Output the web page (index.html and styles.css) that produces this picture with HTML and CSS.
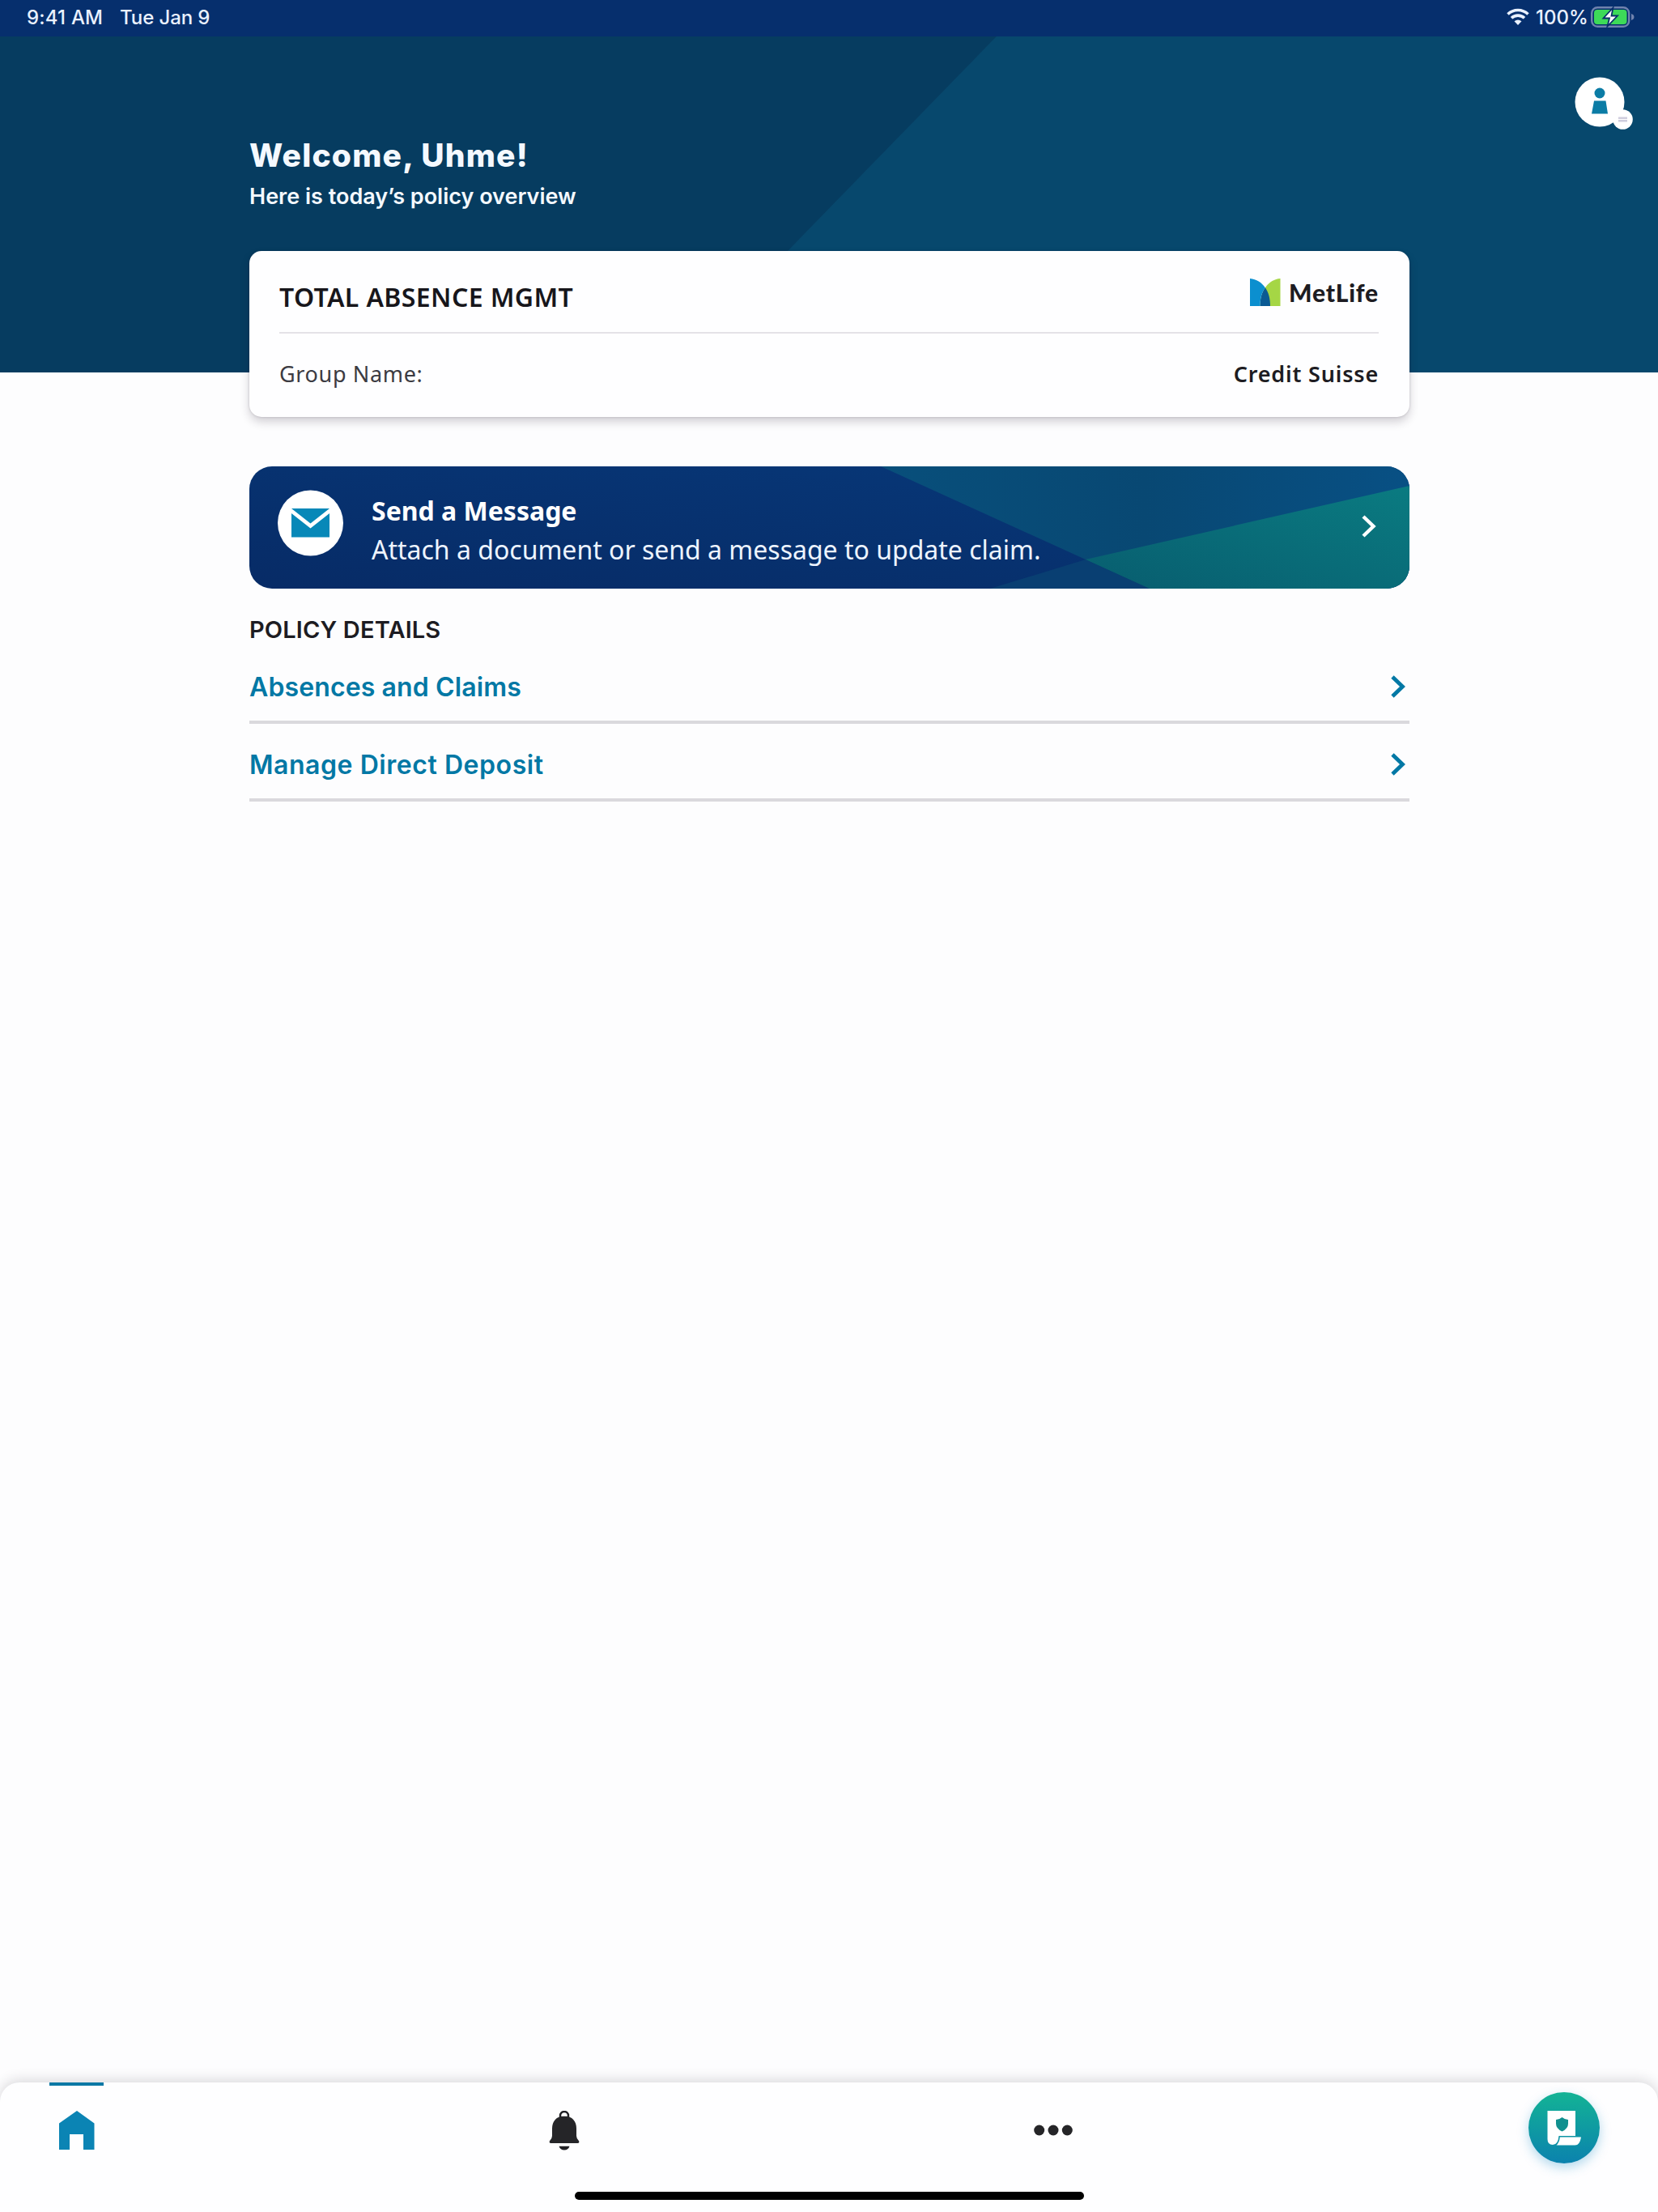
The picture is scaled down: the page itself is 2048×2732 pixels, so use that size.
FILE: index.html
```html
<!DOCTYPE html>
<html lang="en">
<head>
<meta charset="utf-8">
<title>MetLife</title>
<link rel="stylesheet" href="styles.css">
</head>
<body>
<div class="app">
  <header class="status">
    <span class="time">9:41 AM</span><span class="date">Tue Jan 9</span>
    <svg class="wifi" width="28" height="22" viewBox="0 0 28 22"><g fill="none" stroke="#eaf1ff" stroke-width="3.6"><path d="M1.5 7.5C8.500.8 19.500.8 26.500 7.500"/><path d="M6 12.300C10.500 8 17.500 8 22 12.300"/></g><path fill="#eaf1ff" d="M9.500 16.200Q14 12.600 18.500 16.200L14 21z"/></svg>
    <span class="percent">100%</span>
    <svg class="battery" width="54" height="26" viewBox="0 0 54 26"><rect x="1.200" y="1.200" width="46" height="23.600" rx="7" fill="none" stroke="#7083ae" stroke-width="2.400"/><rect x="4" y="4" width="40.500" height="18" rx="4" fill="#3dda58"/><path d="M50 9q3.500 1.200 3.500 4T50 17z" fill="#7083ae"/><path d="M27.500 1.500 15.500 14.500H23L20.500 24.500 33 11.500H25.500z" fill="#fff" stroke="#082f6b" stroke-width="1.800"/></svg>
  </header>

  <section class="hero">
    <div class="greeting">
      <h1>Welcome, Uhme!</h1>
      <p>Here is today’s policy overview</p>
    </div>
    <svg class="avatar" width="74" height="68" viewBox="0 0 74 68"><circle cx="31" cy="31" r="30.500" fill="#fff"/><circle cx="31" cy="20" r="6.500" fill="#0b7ca5"/><path d="M24 29.500H38.500L41 45.500H21z" fill="#0b7ca5"/><circle cx="59.500" cy="52.500" r="12.300" fill="#fff"/><path d="M54 50.800h11M54 54.200h11" stroke="#cfcdde" stroke-width="2.600"/></svg>
  </section>

  <main class="content">
    <article class="card">
      <div class="card-head">
        <h2>TOTAL ABSENCE MGMT</h2>
        <div class="brand">
          <svg width="38" height="34" viewBox="0 0 38 34"><path d="M37.500 0C23 1 12.500 15 12.500 34h25z" fill="#a5d645"/><path d="M18.800 11.300C23 17 25 25 25 34H12.500C12.500 25 14.600 17 18.800 11.300z" fill="#0a5a93"/><path d="M0 0C8 .6 14.500 5 18.800 11.300C14.600 17 12.500 25 12.500 34H0z" fill="#0b8fcf"/></svg>
          <span>MetLife</span>
        </div>
      </div>
      <dl class="card-row"><dt>Group Name:</dt><dd>Credit Suisse</dd></dl>
    </article>

    <a class="message">
      <svg class="message-art" viewBox="0 0 1433 151" preserveAspectRatio="none">
        <defs>
          <linearGradient id="navy" x1="0" y1="1" x2="1" y2="0"><stop offset="0" stop-color="#072b66"/><stop offset="1" stop-color="#07397a"/></linearGradient>
          <linearGradient id="blue" x1="0" x2="1"><stop offset="0" stop-color="#084f7b"/><stop offset=".5" stop-color="#084873"/><stop offset="1" stop-color="#085084"/></linearGradient>
          <linearGradient id="teal" x1="0" y1="1" x2="1" y2="0"><stop offset="0" stop-color="#085d6f"/><stop offset="1" stop-color="#0a7b81"/></linearGradient>
        </defs>
        <rect width="1433" height="151" fill="url(#navy)"/>
        <path d="M780 0H1433V151H1112z" fill="url(#blue)"/>
        <path d="M915 151 1033 115 1112 151z" fill="#093f72"/>
        <path d="M1033 115 1433 24V151H1112z" fill="url(#teal)"/>
      </svg>
      <svg class="envelope" width="82" height="82" viewBox="0 0 82 82"><circle cx="40.500" cy="41" r="40.500" fill="#fff"/><path d="M17 23H64L40.500 41.500zM17 29 40.500 47.500 64 29V58.500H17z" fill="#0788b8"/></svg>
      <div class="message-text"><strong>Send a Message</strong><span>Attach a document or send a message to update claim.</span></div>
      <svg class="chevron" width="18" height="28" viewBox="0 0 18 28"><path d="M2 2 14.500 14 2 26" fill="none" stroke="#fff" stroke-width="4.400"/></svg>
    </a>

    <section class="policy">
      <h3>POLICY DETAILS</h3>
      <a class="link-row"><span class="absences">Absences and Claims</span><svg class="chevron" width="18" height="28" viewBox="0 0 18 28"><path d="M2 2 14.500 14 2 26" fill="none" stroke="#0278a5" stroke-width="4.800"/></svg></a>
      <a class="link-row"><span class="deposit">Manage Direct Deposit</span><svg class="chevron" width="18" height="28" viewBox="0 0 18 28"><path d="M2 2 14.500 14 2 26" fill="none" stroke="#0278a5" stroke-width="4.800"/></svg></a>
    </section>
  </main>

  <nav class="tabs">
    <a class="tab active"><svg width="44" height="48" viewBox="0 0 44 48"><path d="M22 0 43.500 15.500V48H30V29H13V48H0V15.500z" fill="#0b84b4"/></svg></a>
    <a class="tab bell"><svg width="38" height="49" viewBox="0 0 38 49"><path d="M14 9V6a5 5 0 0 1 10 0V9" fill="none" stroke="#202024" stroke-width="2.400"/><path d="M19 6.500C9 6.500 4 13 4 22V31Q4 34.500.8 37.500Q.2 40 2.500 40H35.500Q37.800 40 37.200 37.500Q34 34.500 34 31V22C34 13 29 6.500 19 6.500z" fill="#252528"/><path d="M15.800 6.500a3.200 3 0 0 1 6.400 0z" fill="#fff"/><path d="M12.500 43.800h13Q24 48.500 19 48.500T12.500 43.800z" fill="#202024"/></svg></a>
    <a class="tab more"><svg width="48" height="14" viewBox="0 0 48 14"><g fill="#252528"><circle cx="6.700" cy="7" r="6.500"/><circle cx="24" cy="7" r="6.500"/><circle cx="41.300" cy="7" r="6.500"/></g></svg></a>
    <a class="fab"><svg width="88" height="88" viewBox="0 0 88 88"><path d="M23.500 23H58V54H37.500Q36.500 65 30 65Q23.500 65 23.500 58z" fill="#fff"/><path d="M38.800 55.500H65Q63.500 65.500 57.500 65.500H34.500Q38.300 62 38.800 55.500z" fill="#fff"/><path d="M41.500 31Q45 34 49 34V39Q49 45 41.500 48.500Q34 45 34 39V34Q38 34 41.500 31z" fill="#10908f"/></svg></a>
    <div class="home-indicator"></div>
  </nav>
</div>
</body>
</html>
```

FILE: styles.css
```css
* { box-sizing: border-box; }
body { margin: 0; background: #fdfdfe; }
h1, h2, h3, p, dl, dd { margin: 0; }
svg { display: block; flex: none; }
.app { width: 2048px; height: 2732px; display: flex; flex-direction: column; overflow: hidden; font-family: Inter, sans-serif; color: #1d1c22; }

.status { height: 45px; flex: none; display: flex; align-items: center; padding: 0 29px 3px 33px; background: #062f6d; color: #eaf1ff; font-size: 24px; font-weight: 500; white-space: nowrap; }
.time { width: 115px; letter-spacing: .2px; }
.date { margin-right: auto; letter-spacing: -.1px; }
.wifi { margin-right: 8px; }
.percent { width: 68px; }

.hero { height: 415px; flex: none; display: flex; justify-content: space-between; background: linear-gradient(134.23deg, #063c60 881.5px, #07486d 882.5px); color: #f4f9ff; padding: 50px 29px 0 308px; }
.greeting { padding-top: 72px; }
.greeting h1 { font-size: 39px; line-height: 50px; font-weight: 800; letter-spacing: 1.2px; }
.greeting p { font-size: 27px; line-height: 34px; margin-top: 9px; font-weight: 600; letter-spacing: 0; }

.content { flex: 1; width: 1433px; margin: -150px 0 0 308px; }
.card { height: 205px; padding: 0 38px 0 37px; background: #fefeff; border-radius: 15px; box-shadow: 0 6px 12px rgba(35, 25, 45, .2), 0 0 3px rgba(35, 25, 45, .2); font-family: "Noto Sans", sans-serif; }
.card-head { height: 102px; border-bottom: 2px solid #e4e2e7; display: flex; justify-content: space-between; align-items: flex-start; }
.card-head h2 { font-size: 32px; line-height: 42px; margin-top: 36px; font-weight: 600; letter-spacing: .4px; color: #17161b; }
.brand { display: flex; gap: 10px; margin-top: 34px; font: 900 30px/34px Lato, sans-serif; letter-spacing: .8px; }
.card-row { display: flex; justify-content: space-between; padding-top: 32px; font-size: 27px; line-height: 36px; }
.card-row dt { color: #3c3b42; letter-spacing: .65px; }
.card-row dd { font-weight: 600; letter-spacing: .8px; }

.message { height: 151px; margin-top: 61px; border-radius: 28px; overflow: hidden; display: grid; grid-template-columns: 82px 1fr 18px; column-gap: 34px; padding: 29px 41px 0 35px; color: #fff; font-family: "Noto Sans", sans-serif; position: relative; }
.message > * { position: relative; }
.message .message-art { position: absolute; inset: 0; width: 100%; height: 100%; }
.message-text { display: flex; flex-direction: column; padding-top: 2px; font-size: 32px; line-height: 48px; color: #edf4ff; white-space: nowrap; }
.message-text strong { font-weight: 700; color: #fff; }
.message .chevron { margin-top: 31px; }

.policy h3 { font-size: 29px; line-height: 40px; font-weight: 600; letter-spacing: .15px; padding-top: 31px; }
.link-row { height: 96px; display: flex; justify-content: space-between; align-items: center; border-bottom: 4px solid #dad9dd; padding: 8px 5px 0 0; font-size: 32px; line-height: 40px; font-weight: 600; color: #0278a5; }
.link-row span { padding-top: 2px; }
.absences { letter-spacing: .12px; }
.deposit { letter-spacing: .55px; }

.tabs { height: 160px; flex: none; position: relative; display: flex; align-items: flex-start; background: #fefeff; border-radius: 24px 24px 0 0; box-shadow: 0 -3px 16px rgba(30, 25, 35, .16); }
.tab { display: flex; justify-content: center; }
.active { width: 67px; height: 83px; margin-left: 61px; border-top: 4px solid #0b78a5; padding-top: 31px; }
.bell { margin: 35px 0 0 550px; }
.more { margin: 52px 0 0 561px; }
.fab { width: 88px; height: 88px; margin: 12px 0 0 563px; border-radius: 50%; background: linear-gradient(#13b395, #0b82ae); box-shadow: 0 5px 14px rgba(35, 145, 200, .35); }
.home-indicator { position: absolute; left: 710px; bottom: 15px; width: 629px; height: 10px; border-radius: 5px; background: #000; }
```
